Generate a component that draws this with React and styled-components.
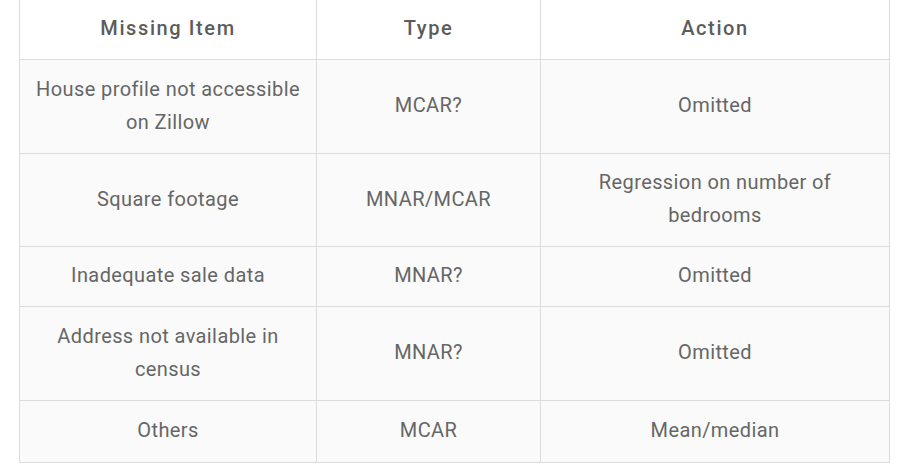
import React from "react";
import styled, { createGlobalStyle } from "styled-components";

const Global = createGlobalStyle`
  html, body { margin: 0; padding: 0; background: #ffffff; }
  body { font-family: Roboto, "Noto Sans", sans-serif; }
`;

const Page = styled.div`
  width: 900px;
  height: 467px;
  padding: 0 11px 0 19px;
  box-sizing: border-box;
  overflow: hidden;
`;

const Table = styled.table`
  width: 870px;
  border-collapse: collapse;
  table-layout: fixed;
  color: #666666;
  font-size: 20px;
`;

const HeadCell = styled.th`
  height: 59px;
  padding: 0 12px 2px;
  box-sizing: border-box;
  font-weight: 500;
  letter-spacing: 1.6px;
  text-align: center;
  background: #ffffff;
  border: 1px solid #dcdcdc;
  border-top: none;
  color: #5c5c5c;
`;

const Cell = styled.td`
  height: ${(p) => p.$h}px;
  padding: 0 15px 1px;
  box-sizing: border-box;
  text-align: center;
  line-height: 33px;
  letter-spacing: 0.4px;
  font-weight: 400;
  background: #fafafa;
  border: 1px solid #dcdcdc;
`;

const rows = [
  { h: 94, cells: ["House profile not accessible on Zillow", "MCAR?", "Omitted"] },
  { h: 93, cells: ["Square footage", "MNAR/MCAR", "Regression on number of bedrooms"] },
  { h: 60, cells: ["Inadequate sale data", "MNAR?", "Omitted"] },
  { h: 94, cells: ["Address not available in census", "MNAR?", "Omitted"] },
  { h: 62, cells: ["Others", "MCAR", "Mean/median"] },
];

export default function App() {
  return (
    <Page>
      <Global />
      <Table>
        <colgroup>
          <col style={{ width: 297 }} />
          <col style={{ width: 224 }} />
          <col style={{ width: 349 }} />
        </colgroup>
        <thead>
          <tr>
            <HeadCell>Missing Item</HeadCell>
            <HeadCell>Type</HeadCell>
            <HeadCell>Action</HeadCell>
          </tr>
        </thead>
        <tbody>
          {rows.map((r, i) => (
            <tr key={i}>
              {r.cells.map((c, j) => (
                <Cell key={j} $h={r.h}>{c}</Cell>
              ))}
            </tr>
          ))}
        </tbody>
      </Table>
    </Page>
  );
}
